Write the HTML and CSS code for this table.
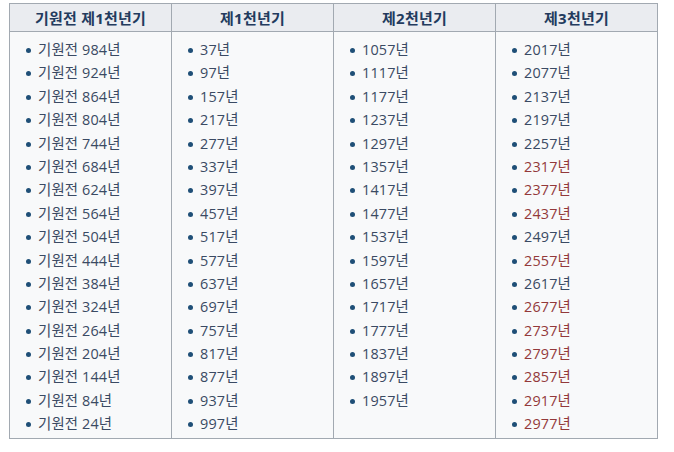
FILE: index.html
```html
<!DOCTYPE html>
<html lang="ko">
<head>
<meta charset="utf-8">
<link rel="stylesheet" href="styles.css">
</head>
<body>
<table class="mill">
<thead>
<tr><th>기원전 제1천년기</th><th>제1천년기</th><th>제2천년기</th><th>제3천년기</th></tr>
</thead>
<tbody>
<tr>
<td><ul>
<li>기원전 984년</li><li>기원전 924년</li><li>기원전 864년</li><li>기원전 804년</li><li>기원전 744년</li><li>기원전 684년</li><li>기원전 624년</li><li>기원전 564년</li><li>기원전 504년</li><li>기원전 444년</li><li>기원전 384년</li><li>기원전 324년</li><li>기원전 264년</li><li>기원전 204년</li><li>기원전 144년</li><li>기원전 84년</li><li>기원전 24년</li>
</ul></td>
<td><ul>
<li>37년</li><li>97년</li><li>157년</li><li>217년</li><li>277년</li><li>337년</li><li>397년</li><li>457년</li><li>517년</li><li>577년</li><li>637년</li><li>697년</li><li>757년</li><li>817년</li><li>877년</li><li>937년</li><li>997년</li>
</ul></td>
<td><ul>
<li>1057년</li><li>1117년</li><li>1177년</li><li>1237년</li><li>1297년</li><li>1357년</li><li>1417년</li><li>1477년</li><li>1537년</li><li>1597년</li><li>1657년</li><li>1717년</li><li>1777년</li><li>1837년</li><li>1897년</li><li>1957년</li>
</ul></td>
<td><ul>
<li>2017년</li><li>2077년</li><li>2137년</li><li>2197년</li><li>2257년</li><li class="new">2317년</li><li class="new">2377년</li><li class="new">2437년</li><li>2497년</li><li class="new">2557년</li><li>2617년</li><li class="new">2677년</li><li class="new">2737년</li><li class="new">2797년</li><li class="new">2857년</li><li class="new">2917년</li><li class="new">2977년</li>
</ul></td>
</tr>
</tbody>
</table>
</body>
</html>
```
FILE: styles.css
```css
html, body {
  margin: 0;
  padding: 0;
  background: #ffffff;
}
body {
  padding: 3px 0 0 9px;
  font-family: "Open Sans", "Noto Sans CJK KR", sans-serif;
  font-size: 14px;
}
.mill {
  border-collapse: collapse;
  width: 649px;
  table-layout: fixed;
  background: #f8f9fa;
  border: 1px solid #a2a9b1;
}
.mill th {
  background: #eaecf0;
  color: #233b5e;
  font-weight: bold;
  font-size: 15px;
  letter-spacing: 0.2px;
  height: 27px;
  padding: 0;
  border: 1px solid #a2a9b1;
  text-align: center;
  vertical-align: middle;
}
.mill td {
  border: 1px solid #a2a9b1;
  vertical-align: top;
  padding: 6px 0 2px 0;
}
.mill ul {
  list-style: none;
  margin: 0;
  padding: 0 0 0 28px;
}
.mill li {
  position: relative;
  line-height: 23.4px;
  height: 23.4px;
  font-size: 14.4px;
  letter-spacing: 0.15px;
  color: #3a4a63;
  white-space: nowrap;
}
.mill li::before {
  content: "";
  position: absolute;
  left: -12px;
  top: 10px;
  width: 5px;
  height: 5px;
  border-radius: 50%;
  background: #1f4f77;
}
.mill li.new {
  color: #93393a;
}
```
